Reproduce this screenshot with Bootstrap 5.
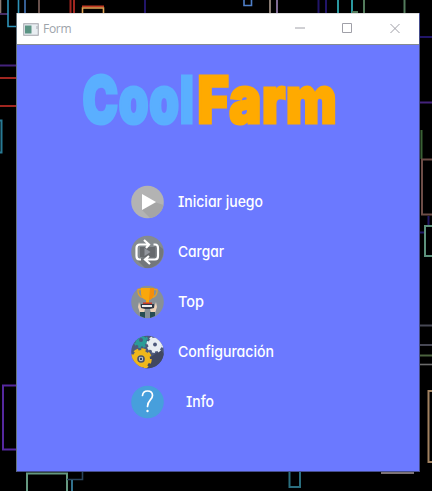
<!DOCTYPE html>
<html lang="es">
<head>
<meta charset="utf-8">
<meta name="viewport" content="width=device-width, initial-scale=1">
<title>CoolFarm</title>
<link href="https://cdn.jsdelivr.net/npm/bootstrap@5.3.0/dist/css/bootstrap.min.css" rel="stylesheet">
<style>
body{background:#000;width:432px;height:491px;overflow:hidden;font-family:Inter,sans-serif}
.wallpaper{position:absolute;left:0;top:0;z-index:0}
.win{position:relative;z-index:1;margin:13px 0 0 16px;width:404px;height:459px;background:#6b79ff;border-left:1px solid #66747c;border-right:1px solid #454d8c;border-bottom:1px solid #454d8c}
.titlebar{height:32px;background:#fff;border-bottom:1px solid #858b92;border-top:1px solid #dedede;padding-left:6px;flex:none}
.caption{font:12px/30px "Open Sans",sans-serif;color:#9da3aa;margin-left:4px;letter-spacing:-.3px}
.logo{font:900 65px Inter,sans-serif;stroke-width:3;stroke-linejoin:miter;letter-spacing:1px}
.cool{fill:#5aafff;stroke:#5aafff}
.farm{fill:#fa0;stroke:#fa0}
.menu{padding:44px 0 0 114px;gap:16px}
.item{height:34px;gap:14px;color:#fff;line-height:34px;font-feature-settings:"ss02","cv08","cv11"}
.item text{fill:#fff;font-family:Inter,sans-serif;font-size:15px;font-weight:500}
svg{display:block;flex:none}
</style>
<script src="https://cdn.jsdelivr.net/npm/bootstrap@5.3.0/dist/js/bootstrap.bundle.min.js" defer></script>
</head>
<body>
<svg class="wallpaper" width="432" height="491" fill="none" stroke-width="1.6">
<path stroke="#8c7a72" d="M0.5 0V13"/><path stroke="#5b3a80" d="M0 14H8"/>
<path stroke="#2e93b8" d="M8 0V26.500H16M18.500 0V13"/><path stroke="#4376b8" d="M25 0V13"/>
<path stroke="#67504b" stroke-width="2" d="M39 0V13"/>
<path stroke="#a02620" stroke-width="2" d="M70.500 0V13M74 0V13M0 78H16M0 106H16"/>
<path stroke="#c43a24" stroke-width="2" d="M82 6.500H104"/><path stroke="#dfa356" d="M82.500 13V8H103.500V13"/>
<path stroke="#211568" stroke-width="2" d="M145 0V13M318.500 0V13M326 0V13M420 37H432"/>
<path stroke="#4f7fc8" d="M244 0V5.500H251.500V0"/>
<path stroke="#ad9c92" d="M270 0V13"/><path stroke="#a188ba" d="M277 0V13"/>
<path stroke="#2a98a0" stroke-width="2" d="M338 0V13M352 0V13"/><path stroke="#537b5c" stroke-width="2" d="M352 12H358M364 0V13M404.500 0V13"/>
<path stroke="#44237c" stroke-width="2" d="M0 65.500H16M420 102.500H432"/>
<path stroke="#287a94" stroke-width="2" d="M0 120.500H1.500V152.500H0"/>
<path stroke="#55289e" stroke-width="2" d="M16 385.500H3V449.500H16"/>
<path stroke="#659880" stroke-width="2" d="M27 491V473.500H67V491"/><path stroke="#28445d" d="M67 479.500H82.500V472"/><path stroke="#32718d" stroke-width="2" d="M72 491V480"/>
<path stroke="#2b6e7e" stroke-width="2" d="M289.500 472V487H300V472"/>
<path stroke="#7d7376" stroke-width="2" d="M381 473H414"/>
<path stroke="#396035" stroke-width="2" d="M421.500 130V159"/><path stroke="#6d4d47" stroke-width="2" d="M432 159.500H422V214.500H432"/>
<path stroke="#211864" stroke-width="2" d="M428.500 216V225M420 232.500H424"/><path stroke="#5d927c" stroke-width="2" d="M432 226H425V256H432"/>
<path stroke="#474854" stroke-width="2" d="M420 325.500H432M420 345H432"/><path stroke="#4b633e" stroke-width="2" d="M420 355.500H432"/><path stroke="#6b6b6b" d="M420 364.500H432"/>
<path stroke="#a18261" stroke-width="2" d="M432 391H428.500V462H432"/>
</svg>
<main class="win d-flex flex-column">
<header class="titlebar d-flex align-items-center">
<svg width="16" height="13"><rect x=".75" y=".75" width="14.500" height="11.500" fill="#e9eef2" stroke="#a2a4aa"/><rect x="2" y="2.500" width="6.500" height="8" fill="#5b9484"/><path d="M14 3V6" stroke="#a9adb2"/></svg>
<span class="caption">Form</span>
<svg class="ms-auto" width="126" height="30" fill="none" stroke="#a0a0a8"><path d="M2 14H12M49.500 9.500H58.500V18.500H49.500ZM97.500 10L106.500 19M106.500 10L97.500 19"/></svg>
</header>
<svg width="402" height="96" role="heading" aria-label="CoolFarm"><text class="logo cool" x="65.500" y="77.500" textLength="112" lengthAdjust="spacingAndGlyphs">Cool</text><text class="logo farm" x="180.500" y="77.500" textLength="140" lengthAdjust="spacingAndGlyphs">Farm</text></svg>
<nav class="menu d-flex flex-column">
<div class="item d-flex align-items-center">
<svg width="33" height="34" viewBox="0 0 33 34"><circle cx="16.500" cy="17" r="16.300" fill="#b3b3b3"/><path d="M11 25L25 17.500L32.700 20A16.300 16.300 0 0 1 19 33Z" fill="#a5a5a5"/><path d="M11 9V25L25 17Z" fill="#fff"/></svg>
<svg width="120" height="34"><text y="22" textLength="85" lengthAdjust="spacingAndGlyphs">Iniciar juego</text></svg></div>
<div class="item d-flex align-items-center">
<svg width="33" height="34" viewBox="0 0 33 34"><circle cx="16.500" cy="17" r="16.300" fill="#858b8f"/><path d="M7 26L26 9L32 14A16.300 16.300 0 0 1 14 33Z" fill="#73777b"/><rect x="9" y="12" width="15" height="10" fill="#66696d"/><g fill="none" stroke="#fff" stroke-width="2.200"><path d="M10 24.500H8.500Q5.500 24.500 5.500 21V13Q5.500 9.500 9 9.500H18M13 5L18 9.500L15 13M22.500 9.500H24Q27 9.500 27 13V21Q27 24.500 24 24.500H14M18 21L14 24.500L19 29"/></g><path d="M13.500 13V21L19.500 17Z" fill="#92969d"/></svg>
<svg width="120" height="34"><text y="22" textLength="46" lengthAdjust="spacingAndGlyphs">Cargar</text></svg></div>
<div class="item d-flex align-items-center">
<svg width="33" height="34" viewBox="0 0 33 34"><circle cx="16.500" cy="17" r="16.300" fill="#889096"/><path d="M10 4.500H7V7Q8 12 12.500 12.500M23 4.500H26V7Q25 12 20.500 12.500" fill="none" stroke="#e0a02c" stroke-width="1.300"/><path d="M10 3H23V9Q22 14 18 15V18H15V15Q11 14 10 9Z" fill="#f9a70b"/><path d="M19 3H23V9Q22 14 18 15Z" fill="#f48e0b"/><path d="M12 17.500H21V20H12Z" fill="#c43b2c"/><path d="M10 19H23V24H10Z" fill="#343b47"/><path d="M11 20H21V22H11Z" fill="#eee"/><path d="M8 17L10 23L14 24L13 28H9L7 22ZM25 17L23 23L19 24L20 28H24L26 22Z" fill="#ecd2b8"/><path d="M9 27H14V33L9 31ZM19 27H24V31L19 33Z" fill="#284d53"/></svg>
<svg width="120" height="34"><text y="22" textLength="26" lengthAdjust="spacingAndGlyphs">Top</text></svg></div>
<div class="item d-flex align-items-center">
<svg width="33" height="34" viewBox="0 0 33 34"><defs><clipPath id="disc"><circle cx="16.500" cy="17" r="16.300"/></clipPath></defs><g clip-path="url(#disc)"><path fill="#4d597b" d="M0 0H33V34H0Z"/><path d="M14 26L30 15L34 20V34H14Z" fill="#414860"/><circle cx="10" cy="6" r="5.500" fill="#2b9b98"/><circle cx="10" cy="6" r="6" fill="none" stroke="#2b9b98" stroke-width="2.500" stroke-dasharray="2.500 2.200"/><circle cx="10" cy="5" r="2" fill="#4d597b"/><circle cx="24" cy="9.500" r="7" fill="#e9eef3"/><circle cx="24" cy="9.500" r="7.500" fill="none" stroke="#e9eef3" stroke-width="2" stroke-dasharray="3 2.890"/><circle cx="24" cy="9.500" r="1.900" fill="#4d597b"/><circle cx="10" cy="24" r="9" fill="#efb71c"/><circle cx="10" cy="24" r="9.500" fill="none" stroke="#efb71c" stroke-width="2.500" stroke-dasharray="4.460 3"/><circle cx="10" cy="24" r="3" fill="#eee" stroke="#48536d" stroke-width="1.700"/><circle cx="10" cy="24" r="1.400" fill="#344563"/></g></svg>
<svg width="120" height="34"><text y="22" textLength="96" lengthAdjust="spacingAndGlyphs">Configuración</text></svg></div>
<div class="item d-flex align-items-center">
<svg width="33" height="34" viewBox="0 0 33 34"><circle cx="16.500" cy="17" r="16.300" fill="#479fdc"/><path d="M11.500 10.500Q12 6 16.500 6Q21.500 6 21.500 10.500C21.500 15 16.500 15 16.500 21.500" fill="none" stroke="#fff" stroke-width="1.700" stroke-linecap="round"/><circle cx="16.500" cy="26" r="1.200" fill="#fff"/></svg>
<svg class="ms-2" width="112" height="34"><text y="22" textLength="28" lengthAdjust="spacingAndGlyphs">Info</text></svg></div>
</nav>
</main>
</body>
</html>
